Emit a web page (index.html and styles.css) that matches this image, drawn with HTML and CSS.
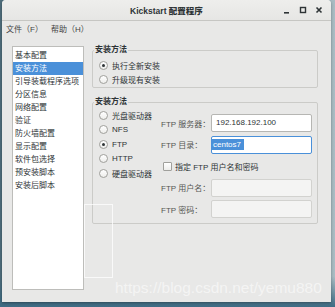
FILE: index.html
```html
<!DOCTYPE html>
<html lang="zh-CN">
<head>
    <meta charset="UTF-8">
    <meta name="viewport" content="width=device-width, initial-scale=1.0">
    <title>Kickstart 配置程序</title>
    <link rel="stylesheet" href="styles.css">
</head>
<body>

    <div class="window">
        <div class="titlebar">
            <span></span>
            <span class="title">Kickstart <b>配置程序</b></span>
            <div class="controls">
                <svg width="8" height="8" viewBox="0 0 8 8"><rect x="1" y="6" width="5" height="1.6" fill="#2e3436"/></svg>
                <svg width="8" height="8" viewBox="0 0 8 8"><rect x="1.5" y="1.5" width="5" height="5" fill="none" stroke="#2e3436" stroke-width="1.4"/></svg>
                <svg width="8" height="8" viewBox="0 0 8 8"><path d="M1.5 1.5 L6.5 6.5 M6.5 1.5 L1.5 6.5" stroke="#2e3436" stroke-width="1.6"/></svg>
            </div>
        </div>

        <div class="menubar">
            <span>文件（F）</span>
            <span>帮助（H）</span>
        </div>

        <div class="content">
            <ul class="nav">
                <li>基本配置</li>
                <li class="selected">安装方法</li>
                <li>引导装载程序选项</li>
                <li>分区信息</li>
                <li>网络配置</li>
                <li>验证</li>
                <li>防火墙配置</li>
                <li>显示配置</li>
                <li>软件包选择</li>
                <li>预安装脚本</li>
                <li>安装后脚本</li>
            </ul>

            <div class="panel">
                <fieldset class="group">
                    <legend>安装方法</legend>
                    <div class="option"><span class="radio checked"></span>执行全新安装</div>
                    <div class="option"><span class="radio"></span>升级现有安装</div>
                </fieldset>

                <fieldset class="group source">
                    <legend>安装方法</legend>
                    <div class="sources">
                        <div class="option"><span class="radio"></span>光盘驱动器</div>
                        <div class="option"><span class="radio"></span>NFS</div>
                        <div class="option"><span class="radio checked"></span>FTP</div>
                        <div class="option"><span class="radio"></span>HTTP</div>
                        <div class="option"><span class="radio"></span>硬盘驱动器</div>
                    </div>
                    <div class="form">
                        <label>FTP 服务器：</label>
                        <div class="input">192.168.192.100</div>
                        <label>FTP 目录：</label>
                        <div class="input focus"><span class="sel">centos7</span></div>
                        <div class="check"><span class="box"></span>指定 FTP 用户名和密码</div>
                        <label>FTP 用户名：</label>
                        <div class="input disabled"></div>
                        <label>FTP 密码：</label>
                        <div class="input disabled"></div>
                    </div>
                </fieldset>
            </div>
        </div>
    </div>

    <div class="ghost"></div>
    <div class="watermark">https://blog.csdn.net/yemu880</div>

</body>
</html>
```

FILE: styles.css
```css
body {
    margin: 0;
    width: 335px;
    height: 307px;
    overflow: hidden;
    position: relative;
    font-family: "Liberation Sans", "Noto Sans CJK SC", sans-serif;
    font-size: 8px;
    color: #2e3436;
    background: linear-gradient(180deg, rgba(0, 0, 0, 0) 90%, #3e6c84 100%),
                linear-gradient(90deg, #4f6e7c 0%, #7d98a4 60%, #a9bcc3 100%);
}

.window {
    margin: 0 4px 0 2px;
    width: 329px;
    height: 302px;
    background: #e8e8e7;
    border-radius: 4px 4px 0 0;
    display: flex;
    flex-direction: column;
    box-shadow: 0 1px 3px rgba(0, 0, 0, 0.35);
}

.titlebar {
    height: 20px;
    display: grid;
    grid-template-columns: 1fr auto 1fr;
    align-items: center;
    background: linear-gradient(#eeeeec, #e6e6e4);
    border-bottom: 1px solid #c6c6c3;
    border-radius: 4px 4px 0 0;
}

.title {
    font-size: 8.5px;
    font-weight: bold;
    color: #2e3436;
}

.controls {
    display: flex;
    justify-content: flex-end;
    align-items: center;
    gap: 8px;
    padding-right: 8px;
}

.menubar {
    height: 14px;
    display: flex;
    align-items: center;
    gap: 8px;
    padding-left: 4px;
    color: #444;
}

.content {
    flex: 1;
    display: flex;
    gap: 8px;
    padding: 9px 13px 12px 10px;
}

.nav {
    list-style: none;
    margin: 2px 0 0;
    padding: 2px 0 0;
    width: 70px;
    background: #fff;
    border: 1px solid #bdbdba;
}

.nav li {
    height: 13px;
    line-height: 13px;
    padding-left: 2px;
    white-space: nowrap;
}

.nav li.selected {
    background: #4a90d9;
    color: #fff;
}

.panel {
    flex: 1;
    display: flex;
    flex-direction: column;
    gap: 8px;
}

.group {
    margin: 0;
    padding: 2px 0 1px 6px;
    border: 1px solid #cbcbc8;
    border-radius: 2px;
}

.group legend {
    padding: 0 1px;
    margin-left: -5px;
    font-weight: bold;
    line-height: 12px;
    color: #2e3436;
}

.option {
    height: 14px;
    display: flex;
    align-items: center;
    gap: 4px;
}

.radio {
    width: 7px;
    height: 7px;
    border: 1px solid #a0a09c;
    border-radius: 50%;
    background: linear-gradient(#fff, #ededeb);
    display: flex;
    align-items: center;
    justify-content: center;
}

.radio.checked::after {
    content: "";
    width: 3px;
    height: 3px;
    border-radius: 50%;
    background: #2e3436;
}

.source {
    display: grid;
    grid-template-columns: 62px 101px;
    padding: 0 6px 5px 6px;
}

.source .option {
    height: 14.5px;
}

.form {
    display: grid;
    grid-template-columns: 50px 101px;
    grid-auto-rows: 18px;
    row-gap: 3.5px;
    align-items: center;
    margin-top: 6px;
}

.form label {
    color: #555753;
    white-space: nowrap;
}

.input {
    height: 16px;
    line-height: 16px;
    border: 1px solid #b6b6b3;
    border-radius: 2px;
    background: #fff;
    padding-left: 4px;
    color: #2e3436;
}

.input.focus {
    border-color: #4a90d9;
    padding-left: 0;
}

.sel {
    background: #4a90d9;
    color: #fff;
    padding: 1px 3px 1px 1px;
}

.input.disabled {
    background: #f4f4f3;
    border-color: #d2d2cf;
}

.check {
    grid-column: 1 / 3;
    display: flex;
    align-items: center;
    gap: 3px;
    padding-left: 2px;
}

.box {
    width: 7px;
    height: 7px;
    border: 1px solid #a0a09c;
    border-radius: 1px;
    background: linear-gradient(#fff, #ededeb);
}

.ghost {
    position: absolute;
    left: 84px;
    top: 204px;
    width: 27px;
    height: 72px;
    border: 1px solid rgba(255, 255, 255, 0.75);
}

.watermark {
    position: absolute;
    left: 115px;
    top: 279px;
    font-size: 15.5px;
    line-height: 18px;
    color: rgba(255, 255, 255, 0.55);
    white-space: nowrap;
}
```
